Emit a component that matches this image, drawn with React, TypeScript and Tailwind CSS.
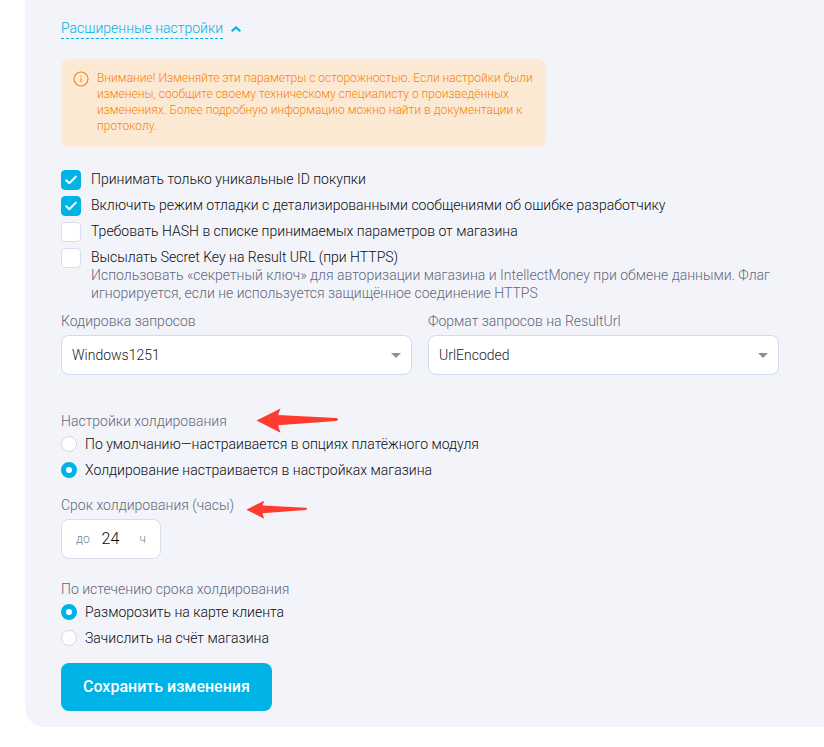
import { useState, type ReactNode } from "react";

const OPTIONS = [
  { id: "unique", label: "Принимать только уникальные ID покупки", checked: true },
  {
    id: "debug",
    label: "Включить режим отладки с детализированными сообщениями об ошибке разработчику",
    checked: true,
  },
  {
    id: "hash",
    label: "Требовать HASH в списке принимаемых параметров от магазина",
    checked: false,
  },
  {
    id: "secret",
    label: "Высылать Secret Key на Result URL (при HTTPS)",
    hint: "Использовать «секретный ключ» для авторизации магазина и IntellectMoney при обмене данными. Флаг игнорируется, если не используется защищённое соединение HTTPS",
    checked: false,
  },
];

function CheckOption({
  id,
  label,
  hint,
  checked,
}: {
  id: string;
  label: string;
  hint?: string;
  checked: boolean;
}) {
  return (
    <div className="flex items-start gap-2.5">
      <span className="grid shrink-0">
        <input
          id={id}
          type="checkbox"
          defaultChecked={checked}
          className="peer col-start-1 row-start-1 size-5 appearance-none rounded-sm border border-[#d9dded] bg-white checked:border-[#00b3e6] checked:bg-[#00b3e6]"
        />
        <svg
          viewBox="0 0 20 20"
          className="pointer-events-none invisible col-start-1 row-start-1 size-5 peer-checked:visible"
          fill="none"
          stroke="white"
          strokeWidth="2"
          strokeLinecap="round"
          strokeLinejoin="round"
        >
          <path d="M5.2 10.3 8.3 13.2 14.8 6.6" />
        </svg>
      </span>
      <div>
        <label htmlFor={id} className="block">
          {label}
        </label>
        {hint && <p className="text-[#62677d]">{hint}</p>}
      </div>
    </div>
  );
}

function RadioOption({
  name,
  label,
  checked = false,
}: {
  name: string;
  label: string;
  checked?: boolean;
}) {
  return (
    <label className="flex h-5 items-center gap-2">
      <input
        type="radio"
        name={name}
        defaultChecked={checked}
        className="size-4 shrink-0 appearance-none rounded-full border border-[#d6d8e2] bg-white checked:border-5 checked:border-[#00b3e6]"
      />
      <span>{label}</span>
    </label>
  );
}

function SelectField({ id, label, value }: { id: string; label: string; value: string }) {
  return (
    <div className="grid min-w-0 flex-1 gap-y-[5px]">
      <label htmlFor={id} className="text-[#62677d]">
        {label}
      </label>
      <div className="grid items-center">
        <select
          id={id}
          defaultValue={value}
          className="col-start-1 row-start-1 h-10 w-full appearance-none rounded-lg border border-[#d2dbee] bg-white px-2.5 text-[#222]"
        >
          <option>{value}</option>
        </select>
        <svg
          viewBox="0 0 10 5"
          className="pointer-events-none col-start-1 row-start-1 mr-[11px] h-[5px] w-2.5 justify-self-end"
        >
          <path d="M0 0h10L5 5z" fill="#8f8f8f" />
        </svg>
      </div>
    </div>
  );
}

function Pointer({ className }: { className: string }) {
  return (
    <svg viewBox="0 0 82 26" className={className} fill="#ff3b30">
      <path d="M0.5 12.5 24.5 0.5 22.2 7 80 10Q82 10.3 82 11.4T80 13L22 17.3 24.5 24.8Z" />
    </svg>
  );
}

function Heading({ children }: { children: ReactNode }) {
  return <legend className="relative text-[#62677d]">{children}</legend>;
}

export default function App() {
  const [open, setOpen] = useState(true);

  return (
    <main className="bg-white pb-5 pl-[25px] font-['Roboto','Noto_Sans',sans-serif] text-sm/[18px] font-light text-[#0b0c12]">
      <section className="rounded-bl-[20px] bg-[#f3f4f9] pt-[18px] pr-[45px] pb-4 pl-9">
        <button
          type="button"
          onClick={() => setOpen(!open)}
          aria-expanded={open}
          className="flex items-center gap-2 text-[#00b3e6]"
        >
          <span className="border-b border-dashed border-[#00b3e6] leading-5">
            Расширенные настройки
          </span>
          <svg viewBox="0 0 10 6" className="h-1.5 w-2.5" fill="none" stroke="currentColor" strokeWidth="2">
            <path d="M0.7 5.3 5 1.4 9.3 5.3" />
          </svg>
        </button>

        {open && (
          <form onSubmit={(e) => e.preventDefault()}>
            <div className="mt-5 flex max-w-[485px] gap-2 rounded-lg bg-[#fce9d4] pt-[11px] pr-3 pb-[13px] pl-3 text-xs/4 text-[#f7830b]">
              <svg
                viewBox="0 0 16 16"
                className="mt-px size-4 shrink-0"
                fill="none"
                stroke="currentColor"
              >
                <circle cx="8" cy="8" r="7" strokeWidth="1.1" />
                <path d="M8 7v4.3M8 4.7v1.3" strokeWidth="1" />
              </svg>
              <p>
                Внимание! Изменяйте эти параметры с осторожностью. Если настройки были изменены,
                сообщите своему техническому специалисту о произведённых изменениях. Более подробную
                информацию можно найти в документации к протоколу.
              </p>
            </div>

            <div className="mt-[23px] grid gap-1.5">
              {OPTIONS.map((option) => (
                <CheckOption key={option.id} {...option} />
              ))}
            </div>

            <div className="mt-2.5 flex gap-4">
              <SelectField id="encoding" label="Кодировка запросов" value="Windows1251" />
              <SelectField id="format" label="Формат запросов на ResultUrl" value="UrlEncoded" />
            </div>

            <fieldset className="mt-[37px]">
              <Heading>
                Настройки холдирования
                <Pointer className="absolute -top-1 left-[195px] h-[26px] w-[82px]" />
              </Heading>
              <div className="mt-1 grid gap-1.5">
                <RadioOption name="hold" label="По умолчанию—настраивается в опциях платёжного модуля" />
                <RadioOption name="hold" label="Холдирование настраивается в настройках магазина" checked />
              </div>
            </fieldset>

            <div className="relative mt-4">
              <label htmlFor="hours" className="text-[#62677d]">
                Срок холдирования (часы)
              </label>
              <Pointer className="absolute top-1 left-[185px] h-5 w-[61px]" />
            </div>
            <div className="mt-[5px] flex h-10 w-[100px] items-center rounded-lg border border-[#d9dded] bg-white px-3.5 text-xs text-[#7b829a]">
              <span>до</span>
              <input
                id="hours"
                type="text"
                defaultValue="24"
                className="ml-3 w-0 min-w-0 flex-1 text-base text-[#0b0c12] outline-none"
              />
              <span>ч</span>
            </div>

            <fieldset className="mt-[21px]">
              <Heading>По истечению срока холдирования</Heading>
              <div className="mt-1 grid gap-1.5">
                <RadioOption name="expire" label="Разморозить на карте клиента" checked />
                <RadioOption name="expire" label="Зачислить на счёт магазина" />
              </div>
            </fieldset>

            <button
              type="submit"
              className="mt-[15px] h-12 rounded-lg bg-[#00b3e6] px-[22px] text-base font-medium text-white"
            >
              Сохранить изменения
            </button>
          </form>
        )}
      </section>
    </main>
  );
}
